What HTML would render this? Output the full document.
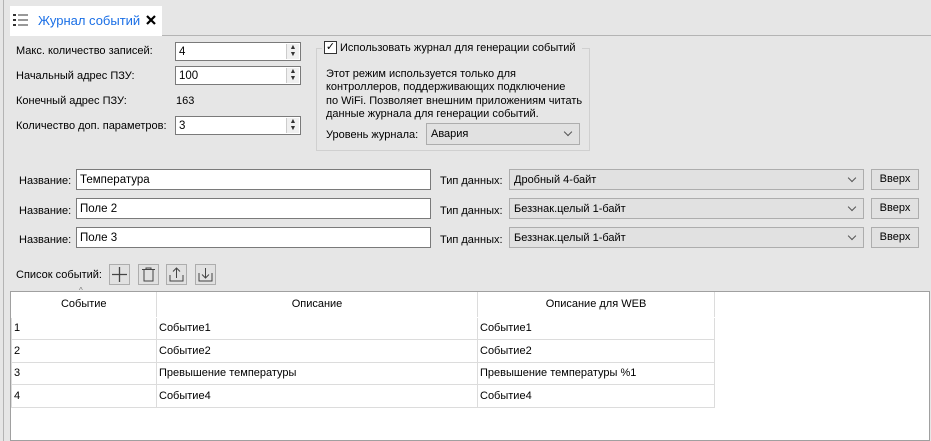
<!DOCTYPE html>
<html><head><meta charset="utf-8"><style>
*{box-sizing:border-box;margin:0;padding:0}
body{width:931px;height:441px;background:#e6e6e6;font-family:"Liberation Sans","DejaVu Sans",sans-serif;font-size:11px;color:#000;position:relative;overflow:hidden}
.a{position:absolute;white-space:nowrap}
.in{position:absolute;background:#fff;border:1px solid #7a7a7a;padding:2px 3px;line-height:15px;font-size:11.5px}
.in.t{padding-top:3px}
.spin{position:absolute;right:1px;top:1px;width:13px;height:15px;border-left:1px solid #ccc;background:#f0f0f0;font-size:7px;line-height:7px;text-align:center;color:#333}
.cb{position:absolute;background:#e1e1e1;border:1px solid #adadad;padding:3px 4px;line-height:14px}
.arr{position:absolute;right:8px;top:5px;width:6px;height:6px;border-right:1px solid #555;border-bottom:1px solid #555;transform:rotate(45deg)}
.btn{position:absolute;background:#e1e1e1;border:1px solid #adadad;text-align:center;line-height:19px}
.ib{position:absolute;top:264px;width:21px;height:21px;border:1px solid #adadad;background:#e1e1e1}
table{position:absolute;left:11px;top:292px;border-collapse:collapse}
td{border:1px solid #dcdcdc;height:22.5px;padding:0 2px;vertical-align:middle}
th{font-weight:normal;height:25px;border-right:1px solid #dcdcdc;border-bottom:1px solid #fff}
</style></head><body>
<div class="a" style="left:3px;top:0;width:1px;height:441px;background:#b4b4b4"></div>
<div class="a" style="left:162px;top:35px;width:769px;height:1px;background:#b4b4b4"></div>
<div class="a" style="left:10px;top:6px;width:152px;height:30px;background:#fff"></div>
<svg class="a" style="left:13px;top:13px" width="16" height="14"><g fill="#333"><rect x="0" y="1" width="3" height="2"/><rect x="0" y="6" width="3" height="2"/><rect x="0" y="11" width="3" height="2"/><rect x="5" y="1.5" width="10" height="1"/><rect x="5" y="6.5" width="10" height="1"/><rect x="5" y="11.5" width="10" height="1"/></g></svg>
<div class="a" style="left:38px;top:13px;font-size:13px;color:#1a6fe6">Журнал событий</div>
<svg class="a" style="left:146px;top:15px" width="10" height="10"><path d="M1 1L9 9M9 1L1 9" stroke="#000" stroke-width="2.2"/></svg>

<div class="a" style="left:16px;top:45px">Макс. количество записей:</div>
<div class="in" style="left:175px;top:42px;width:126px;height:19px">4<div class="spin">▲<br>▼</div></div>
<div class="a" style="left:16px;top:70px">Начальный адрес ПЗУ:</div>
<div class="in" style="left:175px;top:66px;width:126px;height:19px">100<div class="spin">▲<br>▼</div></div>
<div class="a" style="left:16px;top:95px">Конечный адрес ПЗУ:</div>
<div class="a" style="left:176px;top:95px">163</div>
<div class="a" style="left:16px;top:120px">Количество доп. параметров:</div>
<div class="in" style="left:175px;top:116px;width:126px;height:19px">3<div class="spin">▲<br>▼</div></div>

<div class="a" style="left:316px;top:48px;width:274px;height:103px;border:1px solid #d0d0d0"></div>
<div class="a" style="left:322px;top:40px;width:260px;height:16px;background:#e6e6e6"></div>
<div class="a" style="left:324px;top:41px;width:13px;height:13px;background:#fff;border:1px solid #333;font-size:11px;line-height:11px;text-align:center">✓</div>
<div class="a" style="left:340px;top:42px">Использовать журнал для генерации событий</div>
<div class="a" style="left:326px;top:68px;line-height:13.3px">Этот режим используется только для<br>контроллеров, поддерживающих подключение<br>по WiFi. Позволяет внешним приложениям читать<br>данные журнала для генерации событий.</div>
<div class="a" style="left:326px;top:129px">Уровень журнала:</div>
<div class="cb" style="left:426px;top:123px;width:154px;height:22px">Авария<div class="arr"></div></div>

<div class="a" style="left:19px;top:175px">Название:</div>
<div class="in t" style="left:76px;top:169px;width:355px;height:21px">Температура</div>
<div class="a" style="left:19px;top:205px">Название:</div>
<div class="in t" style="left:76px;top:198px;width:355px;height:21px">Поле 2</div>
<div class="a" style="left:19px;top:234px">Название:</div>
<div class="in t" style="left:76px;top:227px;width:355px;height:21px">Поле 3</div>

<div class="a" style="left:440px;top:175px">Тип данных:</div>
<div class="cb" style="left:509px;top:169px;width:355px;height:21px">Дробный 4-байт<div class="arr"></div></div>
<div class="a" style="left:440px;top:205px">Тип данных:</div>
<div class="cb" style="left:509px;top:198px;width:355px;height:21px">Беззнак.целый 1-байт<div class="arr"></div></div>
<div class="a" style="left:440px;top:234px">Тип данных:</div>
<div class="cb" style="left:509px;top:227px;width:355px;height:21px">Беззнак.целый 1-байт<div class="arr"></div></div>
<div class="btn" style="left:871px;top:169px;width:48px;height:21px">Вверх</div>
<div class="btn" style="left:871px;top:198px;width:48px;height:21px">Вверх</div>
<div class="btn" style="left:871px;top:227px;width:48px;height:21px">Вверх</div>

<div class="a" style="left:16px;top:269px">Список событий:</div>
<div class="ib" style="left:109px"><svg width="19" height="19"><path d="M9.5 2v15M2 9.5h15" stroke="#444" stroke-width="1.3"/></svg></div>
<div class="ib" style="left:138px"><svg width="19" height="19" fill="none" stroke="#444"><path d="M3 4.5h13M7 4.5V3h5v1.5M5 5v11h9V5"/></svg></div>
<div class="ib" style="left:166px"><svg width="19" height="19" fill="none" stroke="#444"><path d="M3 10v6h13v-6M9.5 13V3M6 6.5l3.5-3.5 3.5 3.5"/></svg></div>
<div class="ib" style="left:195px"><svg width="19" height="19" fill="none" stroke="#444"><path d="M3 8v8h13V8M9.5 3v10M6 9.5l3.5 3.5 3.5-3.5"/></svg></div>

<div class="a" style="left:10px;top:291px;width:920px;height:150px;background:#fff;border:1px solid #a0a0a0"></div>
<div class="a" style="left:79px;top:286px;font-size:8px;color:#777">^</div>
<table>
<tr><th style="width:145px">Событие</th><th style="width:321px">Описание</th><th style="width:237px">Описание для WEB</th></tr>
<tr><td>1</td><td>Событие1</td><td>Событие1</td></tr>
<tr><td>2</td><td>Событие2</td><td>Событие2</td></tr>
<tr><td>3</td><td>Превышение температуры</td><td>Превышение температуры %1</td></tr>
<tr><td>4</td><td>Событие4</td><td>Событие4</td></tr>
</table>
</body></html>
